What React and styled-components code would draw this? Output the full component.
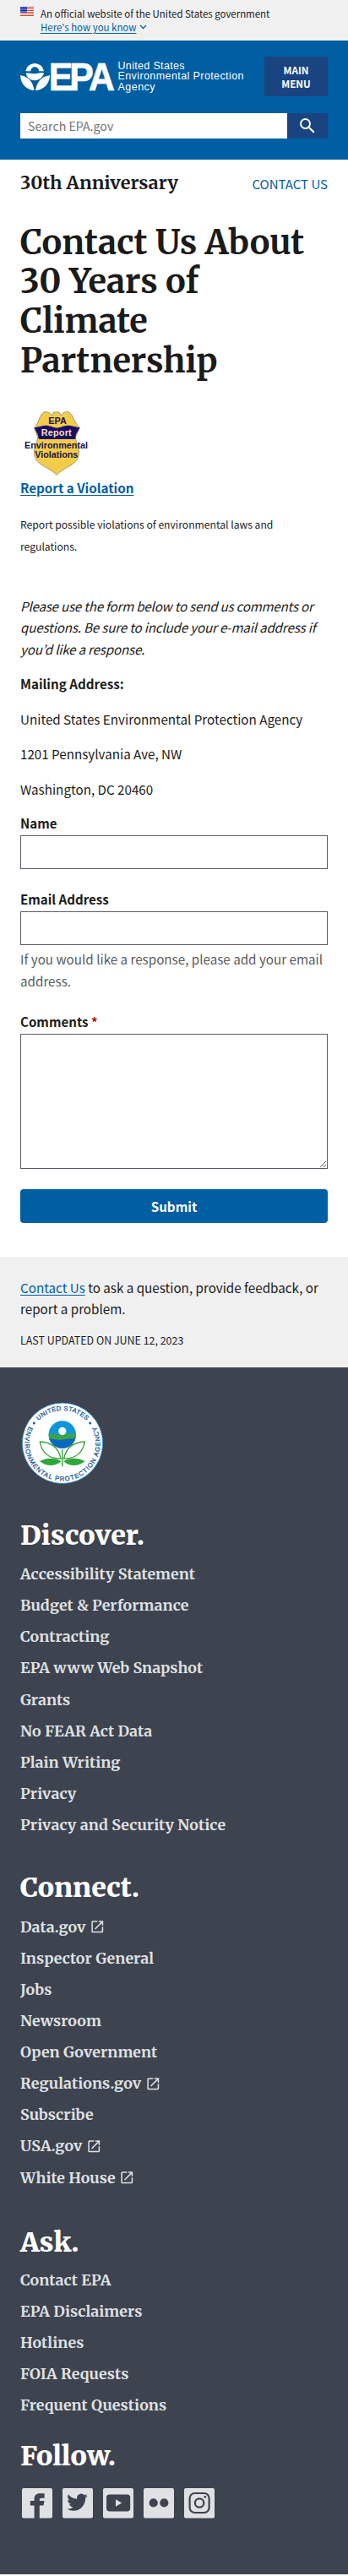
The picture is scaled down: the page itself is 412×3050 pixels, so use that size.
import React from "react";
import styled, { createGlobalStyle } from "styled-components";
import { MdSearch, MdLaunch } from "react-icons/md";

const sans = '"Noto Sans CJK KR", "Noto Sans", sans-serif';
const serif = 'Merriweather, "DejaVu Serif Condensed", "DejaVu Serif", serif';
const blue = "#005ea2";
const navy = "#1a4480";
const ink = "#1b1b1b";
const slate = "#3e4350";
const mist = "#dfe1e2";

const GlobalStyle = createGlobalStyle`
  *, *::before, *::after { box-sizing: border-box; }
  body {
    margin: 0;
    background: #fff;
    color: ${ink};
    font-family: ${sans};
    font-size: 15.2px;
    line-height: 25.44px;
  }
  h1, h2, p, ul, form { margin: 0; padding: 0; }
  ul { list-style: none; }
  svg { display: block; flex: none; overflow: visible; }
`;

const Link = styled.a`
  color: ${blue};
  text-decoration: ${(p) => (p.$plain ? "none" : "underline")};
  text-underline-offset: 1.5px;
  font-weight: ${(p) => (p.$bold ? 700 : 400)};
`;

const Line = styled.span`
  display: block;
  white-space: nowrap;
  letter-spacing: ${(p) => p.$track || 0}px;
`;

const Banner = styled.div`
  display: flex;
  height: 48px;
  padding: 7.5px 24px 0;
  gap: 8px;
  background: #f0f0f0;
  font-size: 11.45px;
  line-height: 16.6px;
`;
const FlagBox = styled.div`
  padding-top: 0.5px;
`;
const BannerToggle = styled.div`
  display: flex;
  align-items: center;
  gap: 4px;
`;

const Header = styled.header`
  height: 141px;
  padding: 19px 24px 0;
  background: ${blue};
`;
const HeaderRow = styled.div`
  display: flex;
  align-items: center;
  justify-content: space-between;
  height: 47px;
`;
const MenuButton = styled.button`
  width: 75px;
  height: 47px;
  padding: 0 18px;
  border: 0;
  background: ${navy};
  color: #fff;
  font: 700 11.65px/16px ${sans};
`;
const Search = styled.form`
  display: flex;
  height: 30px;
  margin-top: 20px;
`;
const SearchInput = styled.input`
  flex: 1;
  min-width: 0;
  border: 0;
  padding: 0 9px;
  background: #fff;
  font: 400 14.2px/28px ${sans};
  &::placeholder { color: #757575; opacity: 1; }
`;
const SearchButton = styled.button`
  display: flex;
  align-items: center;
  justify-content: center;
  width: 48px;
  padding: 0;
  border: 0;
  background: ${navy};
  color: #fff;
`;

const Main = styled.main`
  height: 1299px;
  padding: 15px 24px 0;
`;
const SiteBar = styled.div`
  display: flex;
  align-items: baseline;
  justify-content: space-between;
  height: 26px;
  white-space: nowrap;
`;
const SiteName = styled.div`
  font: 700 21.6px/26px ${serif};
`;
const ContactLink = styled(Link)`
  font-size: 15px;
`;
const Title = styled.h1`
  margin-top: 33.5px;
  font: 700 39.7px/46.8px ${serif};
`;
const Report = styled.section`
  margin-top: 34.3px;
`;
const ReportNote = styled.p`
  margin-top: 17.5px;
  font-size: 12.15px;
  line-height: 25.6px;
`;
const Intro = styled.p`
  margin-top: 45.9px;
  font-style: italic;
`;
const Address = styled.p`
  margin-top: 16px;
  font-weight: ${(p) => (p.$bold ? 700 : 400)};
`;
const Field = styled.div`
  display: flex;
  flex-direction: column;
  margin-top: ${(p) => (p.$first ? 16 : 24)}px;
`;
const Label = styled.label`
  height: 22px;
  margin-bottom: 4px;
  font-weight: 700;
  font-size: 15.1px;
  line-height: 22px;
`;
const Required = styled.span`
  color: #b50909;
`;
const control = `
  width: 100%;
  border: 1px solid #565c65;
  border-radius: 0;
  background: #fff;
  margin: 0;
`;
const TextInput = styled.input`
  ${control}
  height: 40px;
`;
const TextArea = styled.textarea`
  ${control}
  height: 160px;
`;
const Hint = styled.p`
  margin-top: 4px;
  color: #5c5c5c;
`;
const Submit = styled.button`
  width: 100%;
  height: 40px;
  margin-top: 24px;
  border: 0;
  border-radius: 4px;
  background: ${blue};
  color: #fff;
  font: 700 15.2px/16px ${sans};
`;

const Feedback = styled.section`
  height: 131px;
  padding: 24px 24px 0;
  background: #f0f0f0;
`;
const Updated = styled.p`
  margin-top: 14px;
  font-size: 12.45px;
  line-height: 20px;
`;

const Footer = styled.footer`
  height: 1429px;
  padding: 40px 24px 0;
  background: ${slate};
`;
const FooterNav = styled.nav`
  margin-top: ${(p) => p.$top}px;
`;
const FooterHeading = styled.h2`
  color: #fff;
  font: 900 32px/38.4px ${serif};
`;
const FooterList = styled.ul`
  padding-top: ${(p) => p.$gap || 8.4}px;
`;
const FooterItem = styled.li`
  display: flex;
  align-items: center;
  gap: 4.5px;
  height: 37.05px;
  color: ${mist};
  font: 700 17.8px/37px ${serif};
  letter-spacing: 0.08px;
  white-space: nowrap;
`;
const SocialRow = styled.div`
  display: flex;
  margin: 12.5px 0 0 -4px;
`;

const Flag = () => (
  <svg width="16" height="11" viewBox="0 0 16 11">
    <rect width="16" height="11" fill="#fff" />
    {[0, 2, 4, 6, 8, 10].map((y) => (
      <rect key={y} y={y} width="16" height="1" fill="#db3e1f" />
    ))}
    <rect width="8" height="7" fill="#1e33b1" />
    {[1, 3, 5].map((y) =>
      [1, 3, 5, 7].map((x) => <rect key={`${x}${y}`} x={x - 0.4} y={y} width=".8" height=".8" fill="#fff" />)
    )}
  </svg>
);

const Chevron = () => (
  <svg width="9" height="6" viewBox="0 0 9 6">
    <path d="M1 1l3.5 3.5L8 1" fill="none" stroke={blue} strokeWidth="1.3" />
  </svg>
);

const Logo = () => (
  <svg width="268" height="38" viewBox="0 0 268 38" fill="#fff" fontFamily='"Liberation Sans", Arial, sans-serif'>
    <path d="M6.3 12.2A11 11 0 0 1 28 12.2H22.2A5 5 0 0 0 12.2 12.2Z" />
    <path d="M6.6 14.8C11 13.6 14 15.6 18 15.2C22 14.8 24.5 13.8 28 14.6C26.5 20 22 23.3 17.3 23.3C12 23.3 8 20 6.6 14.8Z" />
    <path d="M0 17.2C8.5 18 15 24 16.5 35C9 34.5 0.5 29 0 17.2Z" />
    <path d="M35 17.2C26.5 18 19.5 24 18 35C26 34.5 34.5 29 35 17.2Z" />
    <text transform="scale(.92 1)" x="36.8 63.2 88" y="34.6" fontSize="46.5" fontWeight="700" stroke="#fff" strokeWidth=".7">
      EPA
    </text>
    <g fontSize="12.5">
      <text x="115.5" y="10" textLength="79">United States</text>
      <text x="115.5" y="22.3" textLength="149">Environmental Protection</text>
      <text x="115.5" y="34.6" textLength="44">Agency</text>
    </g>
  </svg>
);

const Badge = () => (
  <svg width="85" height="80" viewBox="0 0 85 80" fontFamily='"Liberation Sans", Arial, sans-serif'>
    <path
      d="M16.500 21C22 17 23 5 28 3C31 2 35 3 37.500 7L39.500 3H46L48 7C50.500 3 54 2 57.500 3C63 6 64 17 70.500 21L66 31C64 36 69 42 69.500 50C70 66 52 67 43 77.500C34 67 16 66 16.500 50C17 42 22 36 20 31Z"
      fill="#f4cc49"
      stroke="#9b9a7c"
      strokeWidth="1"
    />
    <path d="M16.500 21.500C24 20 28 18 33 19C38 20 40 21.500 43.300 21.500C47 21.500 49 20 54 19C59 18 63 20 70.500 21.500L66 29L65 35H22L20.500 29Z" fill="#1c0a6b" />
    <g textAnchor="middle" fontSize="10.8" fontWeight="700" fill="#1a1048">
      <text x="44" y="17.2" textLength="21.5" lengthAdjust="spacingAndGlyphs">EPA</text>
      <text x="42.7" y="30.5" fill="#f6e2b0" textLength="36">Report</text>
      <text x="42.5" y="46" textLength="75">Environmental</text>
      <text x="42.8" y="57.3" textLength="51">Violations</text>
    </g>
  </svg>
);

const Seal = () => (
  <svg width="100" height="100" viewBox="0 0 100 100">
    <defs>
      <path id="seal-top" d="M11 50A39 39 0 0 1 89 50" />
      <path id="seal-bottom" d="M9.500 31.500A44.500 44.500 0 1 0 90.500 31.500" />
      <clipPath id="seal-disc">
        <circle cx="49.800" cy="39.500" r="16.200" />
      </clipPath>
    </defs>
    <circle cx="50" cy="49.800" r="47.700" fill="#fff" stroke="#1c7fc4" strokeWidth=".8" />
    <g fill="#1d5c99" fontFamily='"Liberation Sans", Arial, sans-serif' fontSize="7.6" stroke="#1d5c99" strokeWidth=".3">
      <text textAnchor="middle">
        <textPath href="#seal-top" startOffset="50%" textLength="63">UNITED STATES</textPath>
      </text>
      <text textAnchor="middle">
        <textPath href="#seal-bottom" startOffset="50%" textLength="181">ENVIRONMENTAL PROTECTION AGENCY</textPath>
      </text>
    </g>
    <circle cx="16.300" cy="26" r="1.500" fill="#1d5c99" />
    <circle cx="82.700" cy="26" r="1.500" fill="#1d5c99" />
    <g clipPath="url(#seal-disc)">
      <rect x="30" y="20" width="40" height="40" fill="#0d95d8" />
      <path d="M30 39C38 37.500 42 40.500 50 39.500C58 38.500 62 37.500 70 39V60H30Z" fill="#3aa548" />
      <path d="M30 44.500C38 43.500 42 46.500 50 45.500C58 44.500 62 43.500 70 44.500V60H30Z" fill="#0b68c0" />
    </g>
    <circle cx="49.800" cy="35.500" r="4.700" fill="#fff" />
    <g fill="#fff" stroke="#3fa23f" strokeWidth="1.400">
      <path d="M23.300 48C35 48.500 45 53 48 68C34 68 25.500 61 23.300 48Z" />
      <path d="M76.300 48C64.600 48.500 54.600 53 51.600 68C65.600 68 74 61 76.300 48Z" />
    </g>
    <g fill="#2fa63c">
      <path d="M23 71C31 66.500 42 66.500 48.500 71C42 77.500 31 78 23 71Z" />
      <path d="M76.600 71C68.600 66.500 57.600 66.500 51.100 71C57.600 77.500 68.600 78 76.600 71Z" />
      <rect x="49.100" y="57" width="1.400" height="20.500" />
    </g>
  </svg>
);

const glyphs = {
  Facebook: (
    <path d="M10.300 21V13.300H7.900V10.500H10.300V9.300C10.300 7.300 11.500 6.100 13.500 6.100H16.300V8.900H14.500C13.700 8.900 13.400 9.300 13.400 9.900V10.500H16.200L15.800 13.300H13.400V21Z" />
  ),
  Twitter: (
    <path
      transform="translate(5.600 5.100) scale(.510 .520)"
      d="M23.953 4.570a10 10 0 01-2.825.775 4.958 4.958 0 002.163-2.723c-.951.555-2.005.959-3.127 1.184a4.920 4.920 0 00-8.384 4.482C7.690 8.095 4.067 6.130 1.640 3.162a4.822 4.822 0 00-.666 2.475c0 1.710.870 3.213 2.188 4.096a4.904 4.904 0 01-2.228-.616v.060a4.923 4.923 0 003.946 4.827 4.996 4.996 0 01-2.212.085 4.936 4.936 0 004.604 3.417 9.867 9.867 0 01-6.102 2.105c-.390 0-.779-.023-1.170-.067a13.995 13.995 0 007.557 2.209c9.053 0 13.998-7.496 13.998-13.985 0-.210 0-.420-.015-.630A9.935 9.935 0 0024 4.590z"
    />
  ),
  YouTube: (
    <>
      <rect x="5" y="6.700" width="14.100" height="10" rx="1.800" />
      <path d="M10.500 9.600V13.900L14.100 11.700Z" fill={mist} />
    </>
  ),
  Flickr: (
    <>
      <circle cx="8.850" cy="11.700" r="2.550" />
      <circle cx="15.150" cy="11.700" r="2.550" />
    </>
  ),
  Instagram: (
    <>
      <rect x="6.300" y="6" width="11.500" height="11.500" rx="3" fill="none" stroke={slate} strokeWidth="1.100" />
      <circle cx="12.050" cy="11.750" r="2.600" fill="none" stroke={slate} strokeWidth="1.100" />
      <circle cx="15.400" cy="8.200" r=".700" />
    </>
  ),
};

const SocialIcon = ({ name }) => (
  <svg width="48" height="48" viewBox="0 0 24 24" fill={slate} role="img" aria-label={name}>
    <rect x="3" y="3" width="18" height="17.800" rx="1" fill={mist} />
    {glyphs[name]}
  </svg>
);

const sections = [
  {
    title: "Discover.",
    top: 39.5,
    links: [
      "Accessibility Statement",
      "Budget & Performance",
      "Contracting",
      "EPA www Web Snapshot",
      "Grants",
      "No FEAR Act Data",
      "Plain Writing",
      "Privacy",
      "Privacy and Security Notice",
    ],
  },
  {
    title: "Connect.",
    top: 37.6,
    links: [
      "Data.gov",
      "Inspector General",
      "Jobs",
      "Newsroom",
      "Open Government",
      "Regulations.gov",
      "Subscribe",
      "USA.gov",
      "White House",
    ],
  },
  {
    title: "Ask.",
    top: 39,
    gap: 7.3,
    links: ["Contact EPA", "EPA Disclaimers", "Hotlines", "FOIA Requests", "Frequent Questions"],
  },
];
const external = new Set(["Data.gov", "Regulations.gov", "USA.gov", "White House"]);

export default function App() {
  return (
    <>
      <GlobalStyle />
      <Banner>
        <FlagBox>
          <Flag />
        </FlagBox>
        <div>
          <Line>An official website of the United States government</Line>
          <BannerToggle>
            <Link>Here's how you know</Link>
            <Chevron />
          </BannerToggle>
        </div>
      </Banner>
      <Header>
        <HeaderRow>
          <Logo />
          <MenuButton>MAIN MENU</MenuButton>
        </HeaderRow>
        <Search>
          <SearchInput placeholder="Search EPA.gov" />
          <SearchButton type="button" aria-label="Search">
            <MdSearch size={24} />
          </SearchButton>
        </Search>
      </Header>
      <Main>
        <SiteBar>
          <SiteName>30th Anniversary</SiteName>
          <ContactLink $plain>CONTACT US</ContactLink>
        </SiteBar>
        <Title>
          <Line>Contact Us About</Line>
          <Line>30 Years of</Line>
          <Line>Climate</Line>
          <Line>Partnership</Line>
        </Title>
        <Report>
          <Badge />
          <Line>
            <Link $bold>Report a Violation</Link>
          </Line>
          <ReportNote>
            <Line>Report possible violations of environmental laws and</Line>
            <Line>regulations.</Line>
          </ReportNote>
        </Report>
        <Intro>
          <Line $track={-0.23}>Please use the form below to send us comments or</Line>
          <Line $track={-0.18}>questions. Be sure to include your e-mail address if</Line>
          <Line $track={-0.2}>you’d like a response.</Line>
        </Intro>
        <Address $bold>Mailing Address:</Address>
        <Address>United States Environmental Protection Agency</Address>
        <Address>1201 Pennsylvania Ave, NW</Address>
        <Address>Washington, DC 20460</Address>
        <form>
          <Field $first>
            <Label>Name</Label>
            <TextInput />
          </Field>
          <Field>
            <Label>Email Address</Label>
            <TextInput />
            <Hint>
              <Line>If you would like a response, please add your email</Line>
              <Line>address.</Line>
            </Hint>
          </Field>
          <Field>
            <Label>
              Comments <Required>*</Required>
            </Label>
            <TextArea />
          </Field>
          <Submit type="button">Submit</Submit>
        </form>
      </Main>
      <Feedback>
        <p>
          <Line>
            <Link>Contact Us</Link> to ask a question, provide feedback, or
          </Line>
          <Line>report a problem.</Line>
        </p>
        <Updated>LAST UPDATED ON JUNE 12, 2023</Updated>
      </Feedback>
      <Footer>
        <Seal />
        {sections.map((s) => (
          <FooterNav key={s.title} $top={s.top}>
            <FooterHeading>{s.title}</FooterHeading>
            <FooterList $gap={s.gap}>
              {s.links.map((l) => (
                <FooterItem key={l}>
                  {l}
                  {external.has(l) && <MdLaunch size={18.5} />}
                </FooterItem>
              ))}
            </FooterList>
          </FooterNav>
        ))}
        <FooterNav $top={22.7}>
          <FooterHeading>Follow.</FooterHeading>
          <SocialRow>
            {Object.keys(glyphs).map((n) => (
              <SocialIcon key={n} name={n} />
            ))}
          </SocialRow>
        </FooterNav>
      </Footer>
    </>
  );
}
